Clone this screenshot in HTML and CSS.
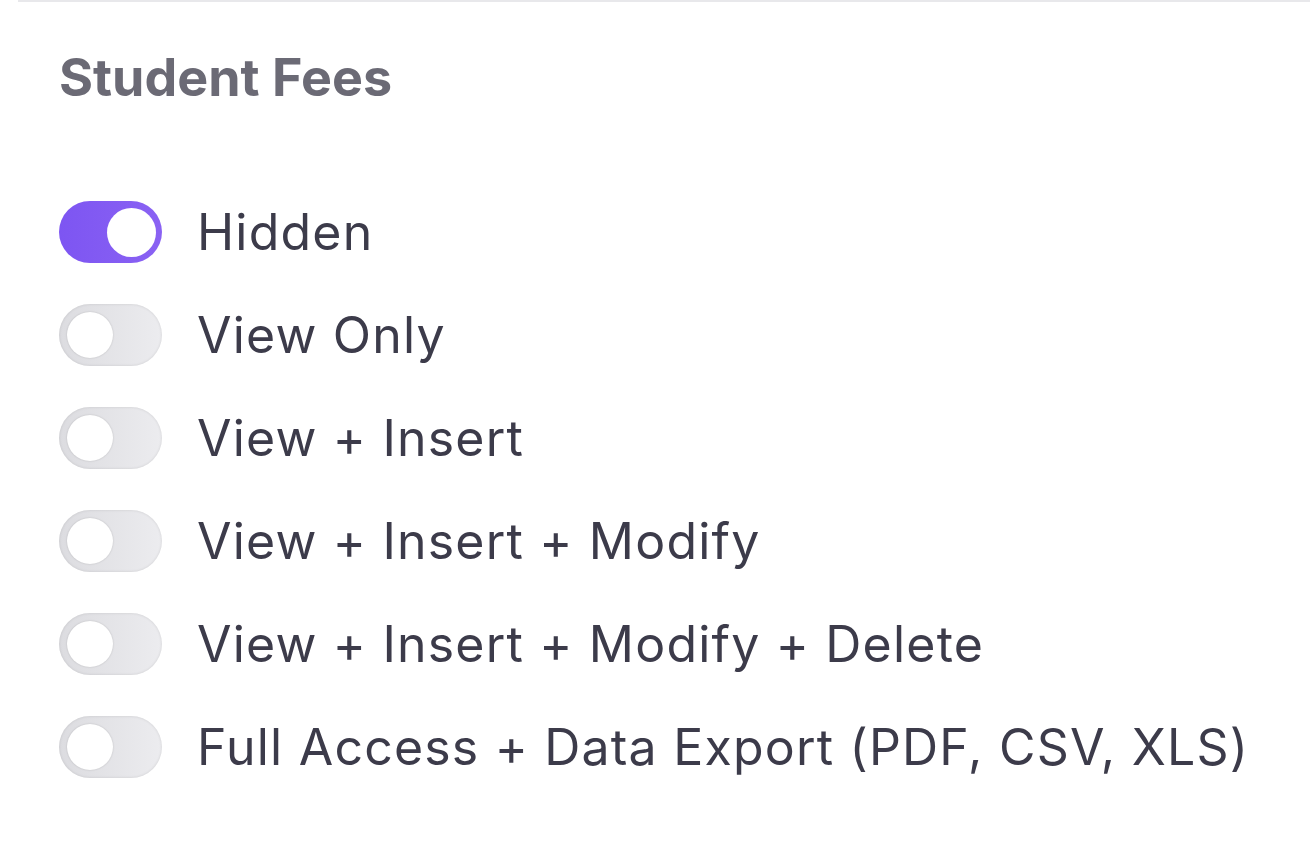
FILE: index.html
```html
<!DOCTYPE html>
<html>
<head>
<meta charset="utf-8">
<link rel="stylesheet" href="styles.css">
</head>
<body>
<div class="divider"></div>
<section class="panel">
  <h2 class="title">Student Fees</h2>
  <ul class="options">
    <li class="option"><span class="toggle on"><span class="knob"></span></span><span class="label">Hidden</span></li>
    <li class="option"><span class="toggle"><span class="knob"></span></span><span class="label">View Only</span></li>
    <li class="option"><span class="toggle"><span class="knob"></span></span><span class="label">View + Insert</span></li>
    <li class="option"><span class="toggle"><span class="knob"></span></span><span class="label">View + Insert + Modify</span></li>
    <li class="option"><span class="toggle"><span class="knob"></span></span><span class="label">View + Insert + Modify + Delete</span></li>
    <li class="option"><span class="toggle"><span class="knob"></span></span><span class="label">Full Access + Data Export (PDF, CSV, XLS)</span></li>
  </ul>
</section>
</body>
</html>
```
FILE: styles.css
```css
html, body {
  margin: 0;
  padding: 0;
  background: #ffffff;
  font-family: Inter, "Noto Sans", sans-serif;
}
.divider {
  margin-left: 18px;
  height: 2px;
  background: #e8e8eb;
}
.panel {
  padding: 0 0 0 59px;
}
.title {
  margin: 0;
  padding-top: 45px;
  font-size: 52px;
  line-height: 62px;
  font-weight: 700;
  color: #6b6a75;
}
.options {
  list-style: none;
  margin: 0;
  padding: 0;
  padding-top: 92px;
  display: flex;
  flex-direction: column;
  gap: 41px;
}
.option {
  display: flex;
  align-items: center;
  gap: 35px;
  height: 62px;
}
.toggle {
  width: 103px;
  height: 62px;
  border-radius: 31px;
  background: linear-gradient(90deg, #dcdce0, #ececef);
  box-shadow: inset 0 0 3px rgba(0,0,0,0.12);
  display: flex;
  align-items: center;
  padding: 0 8px;
  box-sizing: border-box;
  flex-shrink: 0;
}
.knob {
  width: 46px;
  height: 46px;
  border-radius: 50%;
  background: #ffffff;
  box-shadow: 0 0 2px rgba(0,0,0,0.18);
}
.toggle.on {
  background: linear-gradient(90deg, #7d55f2, #8a62f3);
  box-shadow: none;
  justify-content: flex-end;
  padding: 0 6px;
}
.toggle.on .knob {
  width: 49px;
  height: 49px;
  box-shadow: none;
}
.label {
  font-size: 50px;
  font-weight: 400;
  color: #3c3b4a;
  letter-spacing: 1.2px;
  white-space: nowrap;
}
```
